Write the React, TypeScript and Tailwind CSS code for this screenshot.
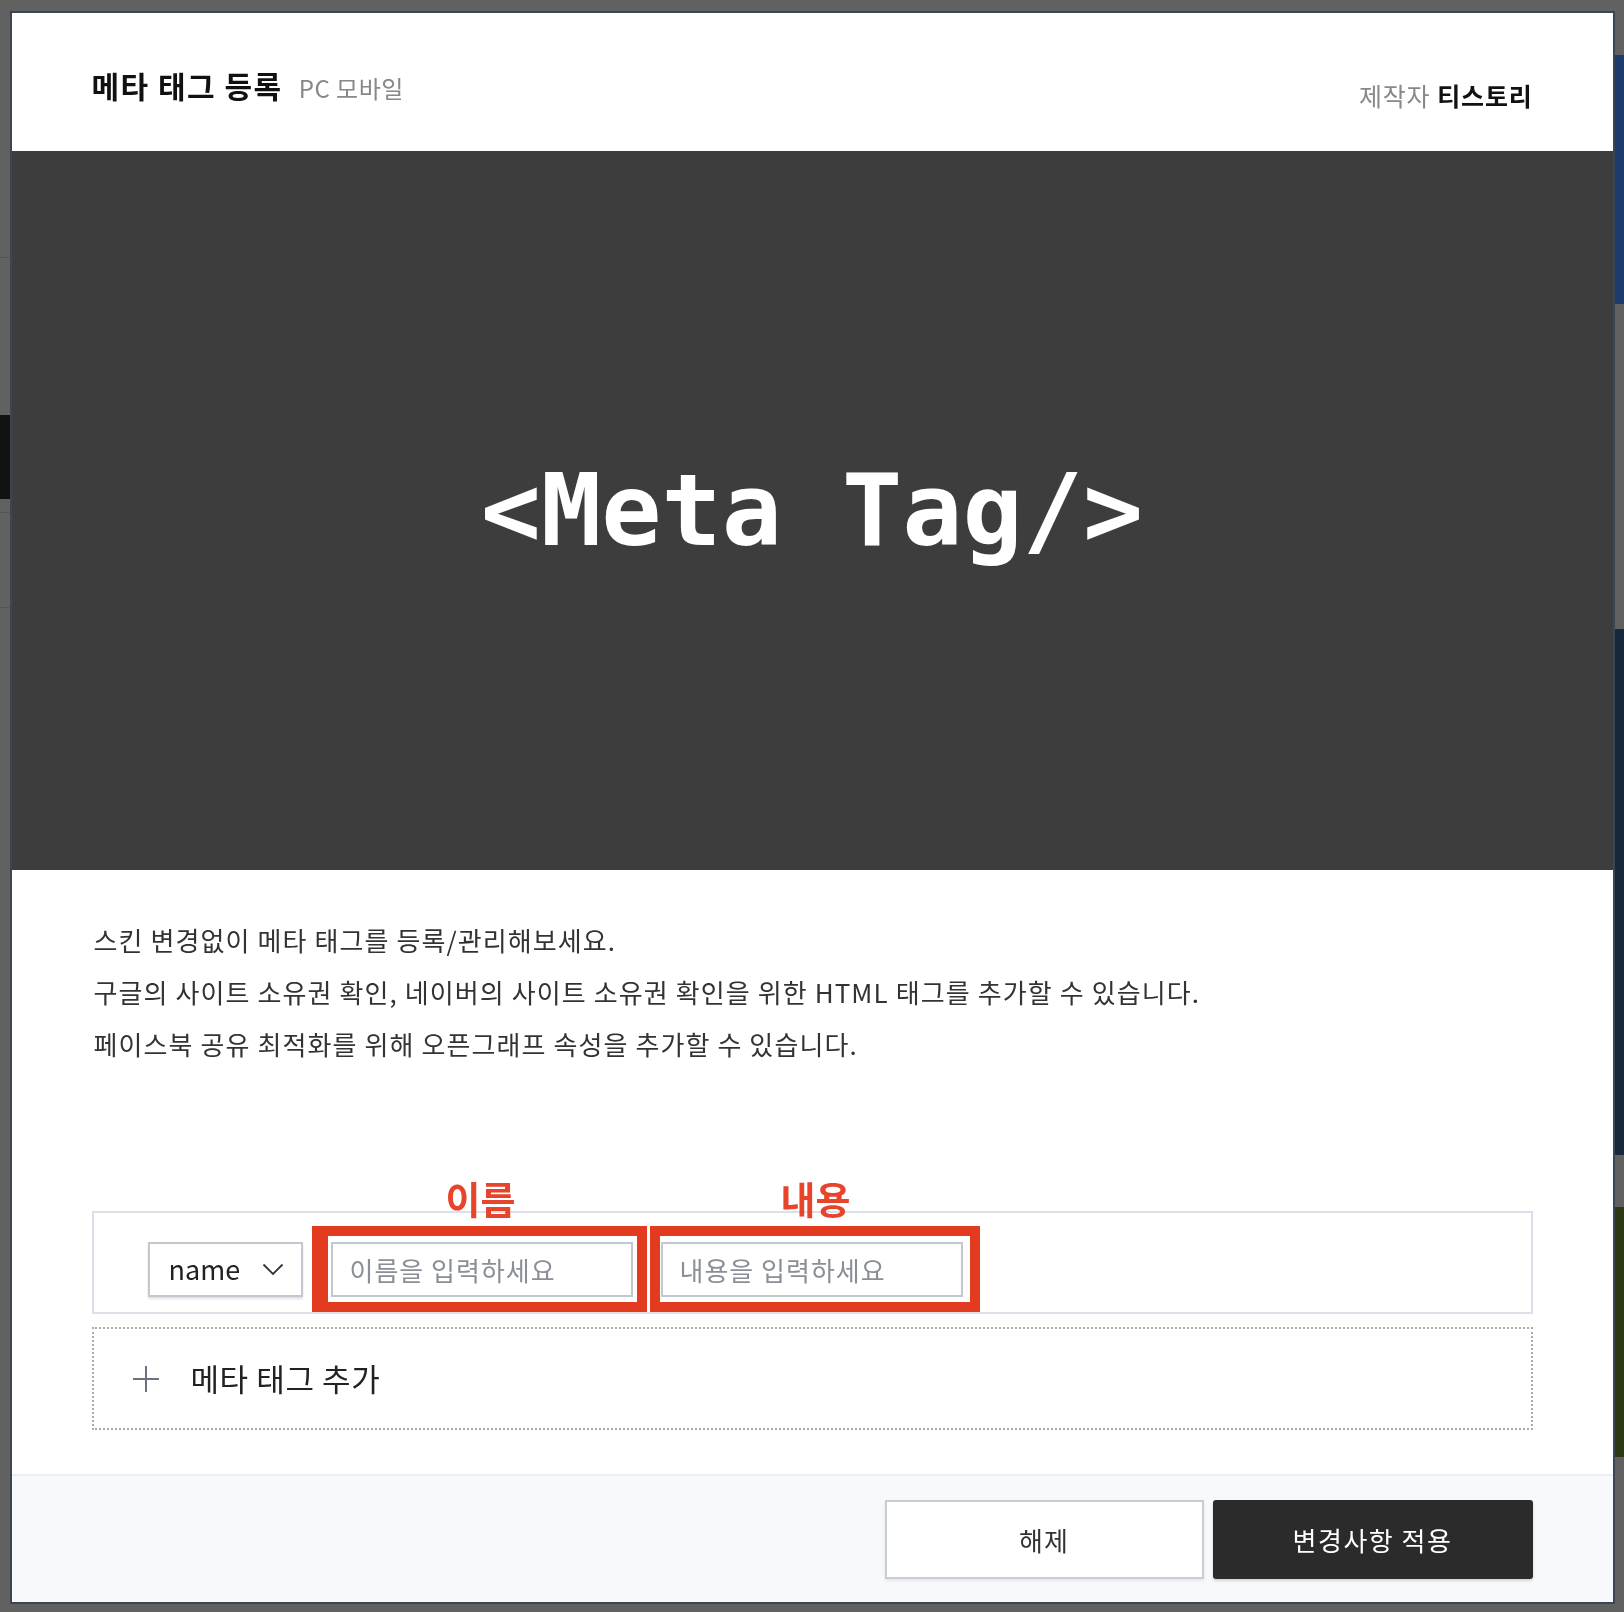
import React from "react";

const font = "font-['Noto_Sans_CJK_KR','Noto_Sans',sans-serif]";

const descLines = [
  "스킨 변경없이 메타 태그를 등록/관리해보세요.",
  "구글의 사이트 소유권 확인, 네이버의 사이트 소유권 확인을 위한 HTML 태그를 추가할 수 있습니다.",
  "페이스북 공유 최적화를 위해 오픈그래프 속성을 추가할 수 있습니다.",
];

// page behind the dimmed overlay, only the edges show
const BackPage = () => (
  <div className="flex h-[1612px] w-full bg-[#616161]">
    <div className="flex w-[90px] flex-col">
      <div className="h-[258px] border-b border-[#555]" />
      <div className="h-[157px]" />
      <div className="h-[84px] bg-[#121212]" />
      <div className="h-[14px] border-b border-[#555]" />
      <div className="h-[95px] border-b border-[#555]" />
    </div>
    <div className="flex-1" />
    <div className="flex w-[60px] flex-col">
      <div className="h-[55px]" />
      <div className="h-[249px] bg-[#1c3a6b]" />
      <div className="h-[325px]" />
      <div className="h-[526px] bg-[#18283c]" />
      <div className="h-[52px]" />
      <div className="h-[250px] bg-[#2b3a14]" />
    </div>
  </div>
);

const Field = ({
  placeholder,
  label,
  frame,
  labelPos,
}: {
  placeholder: string;
  label: string;
  frame: string;
  labelPos: string;
}) => (
  <div className="relative">
    <input
      placeholder={placeholder}
      className="h-[55px] w-[302px] border-2 border-[#c3c7d0] bg-white px-[17px] text-[26px] tracking-[1px] text-[#333] outline-none placeholder:text-[#8a8e97]"
    />
    <div className={frame} />
    <span
      className={`absolute bottom-[76px] -translate-x-1/2 whitespace-nowrap text-[38px] font-bold leading-[46px] text-[#e8442c] ${labelPos}`}
    >
      {label}
    </span>
  </div>
);

export default function App() {
  return (
    <div className={`relative ${font}`}>
      <BackPage />
      <div className="fixed inset-0 flex items-center justify-center pt-[3px]">
        <div className="flex h-[1589px] w-[1601px] flex-col bg-white ring-2 ring-[#3b4556]">
          {/* header */}
          <div className="flex h-[138px] shrink-0 items-start justify-between px-[80px] pt-[52px]">
            <div className="flex items-baseline">
              <h2 className="text-[30px] font-bold leading-[40px] tracking-[1.5px] text-[#111]">
                메타 태그 등록
              </h2>
              <span className="ml-[16px] text-[24px] tracking-[0.5px] text-[#888]">PC 모바일</span>
            </div>
            <div className="mt-[10px] flex items-baseline gap-[7px] text-[25px] leading-[40px] tracking-[0.8px]">
              <span className="text-[#888]">제작자</span>
              <span className="font-bold text-[#111]">티스토리</span>
            </div>
          </div>

          {/* banner */}
          <div className="flex h-[719px] shrink-0 items-center justify-center bg-[#3d3d3d]">
            <span className="font-['DejaVu_Sans_Mono',monospace] text-[100px] font-bold leading-none text-white">
              {"<Meta Tag/>"}
            </span>
          </div>

          {/* body */}
          <div className="flex flex-1 flex-col px-[80px] pt-[44px]">
            <div className="text-[26px] leading-[52px] tracking-[1.1px] text-[#333]">
              {descLines.map((line) => (
                <p key={line} className="px-[2px]">
                  {line}
                </p>
              ))}
            </div>

            <div className="mt-[141px] flex h-[103px] items-start gap-[28px] border-2 border-[#dde0e9] pl-[54px] pt-[29px]">
              <button className="flex h-[55px] w-[155px] items-center justify-between border-2 border-[#c3c7d0] bg-white pl-[19px] pr-[17px] text-[27px] text-[#222] shadow-[0_2px_2px_rgba(0,0,0,0.12)]">
                <span>name</span>
                <svg width="22" height="13" viewBox="0 0 22 13" className="text-[#333]">
                  <path d="M1.5 1.5l9.5 9.5 9.5-9.5" fill="none" stroke="currentColor" strokeWidth="1.8" />
                </svg>
              </button>
              <Field
                placeholder="이름을 입력하세요"
                label="이름"
                labelPos="left-[calc(50%-1px)]"
                frame="pointer-events-none absolute -bottom-[15px] -left-[19px] -right-[14px] -top-[16px] border-[10px] border-l-[16px] border-[#e23b1f]"
              />
              <Field
                placeholder="내용을 입력하세요"
                label="내용"
                labelPos="left-[calc(50%+4px)]"
                frame="pointer-events-none absolute -bottom-[15px] -left-[11px] -right-[17px] -top-[16px] border-[10px] border-[#e23b1f]"
              />
            </div>

            <button className="mt-[13px] flex h-[103px] items-center gap-[30px] border-2 border-dotted border-[#a9abb0] pl-[37px] text-[31px] tracking-[0.6px] text-[#222]">
              <svg width="30" height="30" viewBox="0 0 30 30" className="text-[#6b7280]">
                <path d="M15 2v26M2 15h26" stroke="currentColor" strokeWidth="2" />
              </svg>
              <span>메타 태그 추가</span>
            </button>
          </div>

          {/* footer */}
          <div className="flex h-[128px] shrink-0 items-center justify-end gap-[9px] border-t-2 border-[#eceef2] bg-[#f8f9fb] px-[80px]">
            <button className="h-[79px] w-[319px] border-2 border-[#c8ccd5] bg-white text-[26px] tracking-[1px] text-[#333] shadow-[0_2px_3px_rgba(0,0,0,0.08)]">
              해제
            </button>
            <button className="h-[79px] w-[320px] rounded-[3px] bg-[#2b2b2b] text-[26px] tracking-[1.5px] text-white shadow-[0_2px_3px_rgba(0,0,0,0.15)]">
              변경사항 적용
            </button>
          </div>
        </div>
      </div>
    </div>
  );
}
